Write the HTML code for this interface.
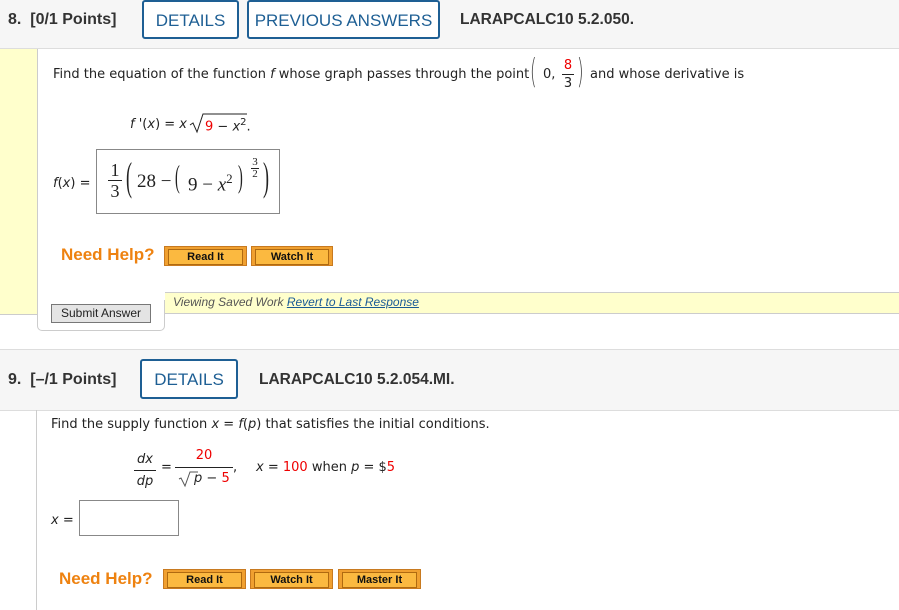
<!DOCTYPE html>
<html><head><style>
body{margin:0;width:899px;height:610px;position:relative;overflow:hidden;background:#fff;font-family:"DejaVu Sans","Liberation Sans",sans-serif;font-size:13px;color:#222}
.a{position:absolute;white-space:nowrap}
.hdr{position:absolute;left:0;width:899px;background:#f6f6f6;border-bottom:1px solid #ddd}
.pts{font-family:"Liberation Sans",sans-serif;font-weight:bold;font-size:16px;color:#333}
.btn{position:absolute;border:2px solid #1e5f94;border-radius:3px;color:#1e5f94;font-family:"Liberation Sans",sans-serif;font-size:17px;text-align:center;background:#fff;box-sizing:border-box}
.nh{font-family:"Liberation Sans",sans-serif;font-weight:bold;font-size:17px;color:#ee8210}
.ob{position:absolute;height:20px;background:#f0a030;border:1px solid #c87a20;box-sizing:border-box}
.ob span{display:block;margin:2px 3px;height:14px;border:1px solid #b06a10;background:#fbb940;font:bold 11px "Liberation Sans",sans-serif;color:#111;text-align:center;line-height:14px}
i{font-style:italic}
.r{color:#e00}
.serif{font-family:"Liberation Serif",serif}
</style></head><body>
<div class="hdr" style="top:0;height:48px"></div>
<div class="a pts" style="left:8px;top:11px">8.&nbsp; [0/1 Points]</div>
<div class="btn" style="left:142px;top:0;width:97px;height:39px;line-height:37px">DETAILS</div>
<div class="btn" style="left:247px;top:0;width:193px;height:39px;line-height:37px">PREVIOUS ANSWERS</div>
<div class="a pts" style="left:460px;top:11px;font-size:15.5px">LARAPCALC10 5.2.050.</div>

<div class="a" style="left:0;top:49px;width:37px;height:265px;background:#ffffcc;border-bottom:1px solid #ccc"></div>
<div class="a" style="left:37px;top:49px;width:1px;height:276px;background:#ccc"></div>
<div class="a" style="left:37px;top:300px;width:128px;height:31px;border-left:1px solid #ccc;border-bottom:1px solid #ccc;border-right:1px solid #ccc;border-radius:0 0 5px 5px;box-sizing:border-box"></div>
<div class="a" style="left:165px;top:292px;width:734px;height:22px;background:#ffffcc;border-top:1px solid #ccc;border-bottom:1px solid #ccc;box-sizing:border-box"></div>
<div class="a" style="left:173px;top:295px;font-family:'Liberation Sans',sans-serif;font-style:italic;font-size:12px;color:#555">Viewing Saved Work <span style="color:#1a5a96;text-decoration:underline">Revert to Last Response</span></div>

<div class="a" style="left:53px;top:67px">Find the equation of the function <i>f</i> whose graph passes through the point</div>
<div class="a" style="left:530px;top:52px;font-size:34px;font-weight:100;color:#444;transform:scaleX(0.5);transform-origin:left">(</div>
<div class="a" style="left:543px;top:67px">0,</div>
<div class="a" style="left:562px;top:58px;width:12px;text-align:center;line-height:15px"><span class="r">8</span><div style="border-top:1px solid #222;margin:1px 0"></div>3</div>
<div class="a" style="left:577px;top:52px;font-size:34px;font-weight:100;color:#444;transform:scaleX(0.5);transform-origin:left">)</div>
<div class="a" style="left:590px;top:67px">and whose derivative is</div>

<div class="a" style="left:130px;top:117px"><i>f</i> '(<i>x</i>) = <i>x</i></div>
<svg class="a" style="left:189px;top:112px" width="72" height="22"><path d="M1 13 L4 11 L8 20 L14 2 L58 2" stroke="#222" fill="none" stroke-width="1"/></svg>
<div class="a" style="left:205px;top:117px"><span class="r">9</span> − <i>x</i><sup style="font-size:10px">2</sup>.</div>

<div class="a" style="left:53px;top:176px"><i>f</i>(<i>x</i>) =</div>
<div class="a" style="left:96px;top:149px;width:184px;height:65px;border:1px solid #888;box-sizing:border-box"></div>
<div class="a serif" style="left:108px;top:160px;font-size:18px;line-height:20px;text-align:center;width:14px">1<div style="border-top:1px solid #222"></div>3</div>
<div class="a serif" style="left:126px;top:153px;font-size:40px;font-weight:100;transform:scaleX(0.45);transform-origin:left">(</div>
<div class="a serif" style="left:137px;top:171px;font-size:19px">28 − </div>
<div class="a serif" style="left:175px;top:158px;font-size:32px;transform:scaleX(0.45);transform-origin:left">(</div>
<div class="a serif" style="left:188px;top:171px;font-size:19px">9 − <i>x</i><sup style="font-size:13px">2</sup></div>
<div class="a serif" style="left:238px;top:158px;font-size:32px;transform:scaleX(0.45);transform-origin:left">)</div>
<div class="a serif" style="left:251px;top:157px;font-size:11px;line-height:11px;text-align:center;width:8px">3<div style="border-top:1px solid #222"></div>2</div>
<div class="a serif" style="left:263px;top:153px;font-size:40px;transform:scaleX(0.45);transform-origin:left">)</div>

<div class="a nh" style="left:61px;top:245px">Need Help?</div>
<div class="ob" style="left:164px;top:246px;width:83px"><span>Read It</span></div>
<div class="ob" style="left:251px;top:246px;width:82px"><span>Watch It</span></div>
<div class="a" style="left:51px;top:304px;width:100px;height:19px;background:#e4e4e4;border:1px solid #777;box-sizing:border-box;font:12px 'Liberation Sans',sans-serif;color:#222;text-align:center;line-height:17px">Submit Answer</div>

<div class="hdr" style="top:349px;height:60px;border-top:1px solid #ddd"></div>
<div class="a pts" style="left:8px;top:371px">9.&nbsp; [–/1 Points]</div>
<div class="btn" style="left:140px;top:359px;width:98px;height:40px;line-height:38px">DETAILS</div>
<div class="a pts" style="left:259px;top:371px;font-size:15.5px">LARAPCALC10 5.2.054.MI.</div>
<div class="a" style="left:36px;top:410px;width:1px;height:200px;background:#ccc"></div>

<div class="a" style="left:51px;top:417px">Find the supply function <i>x</i> = <i>f</i>(<i>p</i>) that satisfies the initial conditions.</div>
<div class="a" style="left:134px;top:451px;width:22px;text-align:center;line-height:17px"><i>dx</i><div style="border-top:1px solid #222;margin:2px 0"></div><i>dp</i></div>
<div class="a" style="left:161px;top:460px">=</div>
<div class="a" style="left:175px;top:448px;width:58px;text-align:center;line-height:16px"><span class="r">20</span><div style="border-top:1px solid #222;margin:3px 0"></div></div>
<svg class="a" style="left:178px;top:469px" width="20" height="20"><path d="M1 10 L3 9 L7 17 L12 3 L20 3" stroke="#555" fill="none"/></svg>
<div class="a" style="left:194px;top:471px"><i>p</i> − <span class="r">5</span></div>
<div class="a" style="left:233px;top:460px">,</div>
<div class="a" style="left:256px;top:460px"><i>x</i> = <span class="r">100</span> when <i>p</i> = $<span class="r">5</span></div>

<div class="a" style="left:51px;top:513px"><i>x</i> =</div>
<div class="a" style="left:79px;top:500px;width:100px;height:36px;border:1px solid #888;box-sizing:border-box"></div>

<div class="a nh" style="left:59px;top:569px">Need Help?</div>
<div class="ob" style="left:163px;top:569px;width:83px"><span>Read It</span></div>
<div class="ob" style="left:250px;top:569px;width:83px"><span>Watch It</span></div>
<div class="ob" style="left:338px;top:569px;width:83px"><span>Master It</span></div>
</body></html>
